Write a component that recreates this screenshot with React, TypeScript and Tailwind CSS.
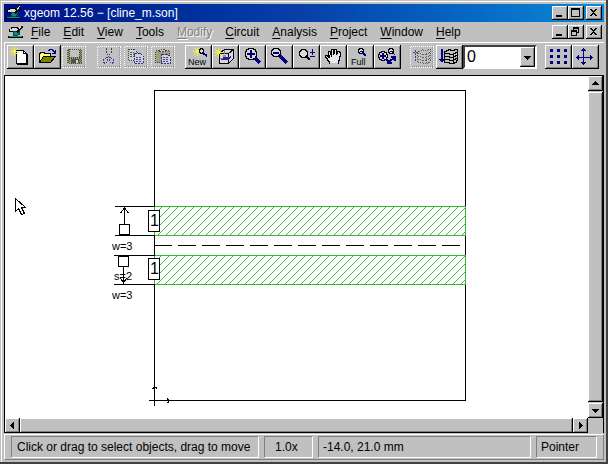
import React from "react"
import clsx from "clsx"

interface ToolItem {
  label: string
  icon: React.ReactNode
  disabled?: boolean
}

const raised =
  "bg-[#c0c0c0] shadow-[inset_-1px_-1px_0_#000,inset_1px_1px_0_#fff,inset_-2px_-2px_0_#808080]"

const menus = [
  { text: "File" },
  { text: "Edit" },
  { text: "View" },
  { text: "Tools" },
  { text: "Modify", disabled: true },
  { text: "Circuit" },
  { text: "Analysis" },
  { text: "Project" },
  { text: "Window" },
  { text: "Help" },
]

const Star = ({ x, y }: { x: number; y: number }) => (
  <g transform={`translate(${x} ${y})`} stroke="#f4f440" fill="none">
    <path d="M-3 -3L4 4M4 -3L-3 4M0.5 -4V5M-4 0.5H5" />
  </g>
)

const Layers = ({ color }: { color: string }) => (
  <g fill="none" stroke={color}>
    <path d="M8.5 6.5h2v-1h2v-1h2v1h4v-1h3v11h-1v2h-2v1h-5v-1h-5z" />
    <path d="M9 8.5h4v1h4v-1h2v-1h2M9 11.5h4v1h4v-1h2v-1h2M9 14.5h4v1h4v-1h2v-1h2M17.5 9v9" />
  </g>
)

const fileTools: ToolItem[] = [
  {
    label: "New project",
    icon: (
      <>
        <path d="M9.5 5.5h7l3 3v10h-10z" fill="#fff" stroke="#000" />
        <path d="M16.5 5.5v3h3M10 19.5h11M20.5 9v10" fill="none" stroke="#000" />
        <Star x={7} y={6} />
      </>
    ),
  },
  {
    label: "Open",
    icon: (
      <>
        <path d="M5.5 17.5v-9h1v-1h4v1h6v3" fill="#ffff80" stroke="#000" />
        <path d="M5.5 17.5l4 -6h12l-5 6z" fill="#808000" stroke="#000" />
        <path d="M14 5.5h1v-1h3v1h1v1h1v1M21.5 5v3.5h-4" fill="none" stroke="#000080" />
      </>
    ),
  },
  {
    label: "Save",
    disabled: true,
    icon: (
      <>
        <path d="M6.5 4.5h14v14h-13l-1 -1z" fill="#a0a080" stroke="#505040" strokeDasharray="1 1" />
        <path d="M9 5h9v7h-9z" fill="#c0c0c0" />
        <path d="M10 14h8v4h-8z" fill="#505050" />
        <path d="M15 15h2v3h-2z" fill="#d0d0d0" />
        <path
          d="M7.5 5v13M8.5 4v14M18.5 5v13M19.5 4v13M8 12.5h11M8 13.5h11"
          stroke="#505030"
          strokeDasharray="1 1"
        />
      </>
    ),
  },
]

const editTools: ToolItem[] = [
  {
    label: "Cut",
    disabled: true,
    icon: (
      <>
        <path d="M10.5 3v4l3 6M15.5 3v4l-4 6" fill="none" stroke="#404040" strokeDasharray="2 1" />
        <path
          d="M10.5 12.5l-3 2v3l2 1l2 -2v-3zM14.5 12.5l3 2v3l-2 1l-2 -2v-3z"
          fill="none"
          stroke="#4040a0"
          strokeDasharray="2 1"
        />
      </>
    ),
  },
  {
    label: "Copy",
    disabled: true,
    icon: (
      <>
        <path d="M5.5 4.5h6l3 3v8h-9z" fill="#d0d0d0" stroke="#404040" strokeDasharray="1 1" />
        <path d="M7 7.5h4M7 9.5h6M7 11.5h6" stroke="#505050" strokeDasharray="2 1" />
        <path d="M11.5 8.5h6l3 3v7h-9z" fill="#d0d0d0" stroke="#303090" strokeDasharray="2 1" />
        <path d="M13 12.5h6M13 14.5h6M13 16.5h6" stroke="#4040a0" strokeDasharray="2 1" />
      </>
    ),
  },
  {
    label: "Paste",
    disabled: true,
    icon: (
      <>
        <path d="M5.5 5.5h14v12h-14z" fill="#a0a080" stroke="#404030" strokeDasharray="1 1" />
        <path d="M9.5 6.5v-2h2l1 -1l1 1h2v2z" fill="#d0d0b0" stroke="#404040" strokeDasharray="2 1" />
        <path d="M11.5 9.5h6l3 3v6h-9z" fill="#d0d0d0" stroke="#303090" strokeDasharray="2 1" />
        <path d="M13 12.5h5M13 14.5h6M13 16.5h6" stroke="#4040a0" strokeDasharray="2 1" />
      </>
    ),
  },
]

const viewTools: ToolItem[] = [
  {
    label: "New view",
    icon: (
      <>
        <Star x={12} y={6} />
        <path d="M15.5 3.5h2v1h1v3h-1v1h-2v-1h-1v-3h1z" fill="#d8d8d8" stroke="#000" />
        <path d="M18 8l4 3" stroke="#000080" strokeWidth="2" />
        <text x="3" y="20" fontSize="9" className="font-['Liberation_Sans',Arial,sans-serif]">
          New
        </text>
      </>
    ),
  },
  {
    label: "3D view",
    icon: (
      <>
        <path d="M7.5 8.5l5 -4h9v9l-5 5h-9z" fill="#d8d8d8" stroke="#000" />
        <path d="M7.5 8.5h9v10M16.5 8.5l5 -4" fill="none" stroke="#000" />
        <path d="M9 15l2 -3h6l2 -2v3l-3 2z" fill="#2020a0" />
        <path d="M11 12v-2h3v2z" fill="#c08080" />
        <path d="M12.5 5v4M8 13.5h3" stroke="#808080" />
        <Star x={6} y={7} />
      </>
    ),
  },
  {
    label: "Zoom in",
    icon: (
      <>
        <path
          d="M9.5 3.5h5v1h2v2h1v5h-1v2h-2v1h-5v-1h-2v-2h-1v-5h1v-2h2z"
          fill="#d8d8d8"
          stroke="#000"
        />
        <path d="M12 5v8M8 9h8" stroke="#000080" strokeWidth="2" />
        <path d="M16 13l5 5" stroke="#000080" strokeWidth="3" />
      </>
    ),
  },
  {
    label: "Zoom out",
    icon: (
      <>
        <path d="M7.5 3.5h5v1h1v1h1v4h-1v1h-1v1h-5v-1h-1v-1h-1v-4h1v-1h1z" fill="#d8d8d8" stroke="#000" />
        <path d="M7 8h6" stroke="#000080" strokeWidth="2" />
        <path d="M14 11l7 7" stroke="#000080" strokeWidth="3" />
      </>
    ),
  },
  {
    label: "Zoom factor",
    icon: (
      <>
        <path d="M8.5 4.5h4v1h1v1h1v4h-1v1h-1v1h-4v-1h-1v-1h-1v-4h1v-1h1z" fill="#d8d8d8" stroke="#000" />
        <path d="M14 12l3 3" stroke="#000" strokeWidth="2" />
        <path d="M19.5 4v6M17 7.5h5M17 11.5h5" stroke="#000080" />
      </>
    ),
  },
  {
    label: "Pan",
    icon: (
      <>
        <path
          d="M9 18v-2h-1v-1h-1v-2h-1v-1h-1v-2h2v1h1v1h1v-3h-1v-3h2v2h1v2h1v-6h2v5h1v-5h2v6h1v-4h2v6h-1v4h-1v2z"
          fill="#e8e8e8"
        />
        <path
          d="M9.5 19v-2.5h-1v-1h-1v-2h-1v-1h-1v-2h2v1h1v1h1v-2h-1v-4h2v3h1v2M11.5 9v-4.5h2v5M14.5 9v-4.5h2v5.5M17.5 9v-2.5h2v1h1v4h-1v4h-1v3.5"
          fill="none"
          stroke="#000"
        />
      </>
    ),
  },
  {
    label: "Full view",
    icon: (
      <>
        <path d="M12.5 3.5h3v1h1v3h-1v1h-3v-1h-1v-3h1z" fill="#d8d8d8" stroke="#000" />
        <path d="M13 6.5h3" stroke="#000080" />
        <path d="M16 8l3 3" stroke="#000080" strokeWidth="2" />
        <text x="4" y="20" fontSize="9" className="font-['Liberation_Sans',Arial,sans-serif]">
          Full
        </text>
      </>
    ),
  },
  {
    label: "Previous view",
    icon: (
      <>
        <path d="M7.5 6.5h3v1h2v2h1v3h-1v2h-2v1h-3v-1h-2v-2h-1v-3h1v-2h2z" fill="#d8d8d8" stroke="#000" />
        <path d="M9 8v6M6 11h6" stroke="#000080" strokeWidth="2" />
        <path d="M15.5 3.5h3v1h1v3h-1v1h-3v-1h-1v-3h1z" fill="#d8d8d8" stroke="#000" />
        <path d="M16 6.5h3M19 8l2 2" stroke="#000080" />
        <path d="M12 14l3 3l6 -5M21 11v5M17 11.5h5M13 18h5" fill="none" stroke="#000080" strokeWidth="2" />
      </>
    ),
  },
]

const levelTools: ToolItem[] = [
  {
    label: "Level up",
    disabled: true,
    icon: (
      <>
        <g strokeDasharray="1 1">
          <Layers color="#606060" />
        </g>
        <path d="M6.5 5v12M4 7.5h5" stroke="#4040a0" strokeDasharray="2 1" />
      </>
    ),
  },
  {
    label: "Level down",
    icon: (
      <>
        <Layers color="#000" />
        <path d="M5 4h2v11h-2z" fill="#000080" />
        <path d="M3 14h6l-3 4z" fill="#000080" />
      </>
    ),
  },
]

const gridTools: ToolItem[] = [
  {
    label: "Snap",
    icon: (
      <path
        d="M5 4h3v3h-3zM12 4h3v3h-3zM19 4h3v3h-3zM5 10h3v3h-3zM12 10h3v3h-3zM19 10h3v3h-3zM5 16h3v3h-3zM12 16h3v3h-3zM19 16h3v3h-3z"
        fill="#000080"
      />
    ),
  },
  {
    label: "Measure",
    icon: (
      <path
        d="M11.5 3v17M9 5.5h5M10 4.5h3M9 17.5h5M10 18.5h3M4 12.5h17M6.5 10v5M5.5 11v3M18.5 10v5M19.5 11v3"
        stroke="#000080"
        fill="none"
      />
    ),
  },
]

const ToolGroup = ({ items }: { items: ToolItem[] }) => (
  <div className="flex">
    {items.map((item) => (
      <button
        key={item.label}
        type="button"
        aria-label={item.label}
        disabled={item.disabled}
        className={clsx("h-6 w-[27px]", !item.disabled && raised)}
      >
        <svg className="block h-6 w-[27px]" viewBox="0 0 27 24" shapeRendering="crispEdges">
          {item.disabled && (
            <g fill="none" strokeDasharray="1 1">
              <path d="M1.5 23V1.5H25" stroke="#fff" />
              <path d="M2 22.5H25M24.5 2V23" stroke="#fff" />
              <path d="M1 21.5H25M23.5 2V23" stroke="#909090" />
            </g>
          )}
          {item.icon}
        </svg>
      </button>
    ))}
  </div>
)

const AppIcon = () => (
  <svg className="size-4 shrink-0" viewBox="0 0 16 16" shapeRendering="crispEdges" aria-hidden="true">
    <path d="M1 5h2v-2h7v1h2v4h-11z" fill="#000" />
    <path d="M2 5h2v-1h5v1h1v2h-8z" fill="#d8d8d8" />
    <path d="M5 7h7v4h-2v1h-5z" fill="#005058" />
    <path d="M6 8h4v3h-4z" fill="#208080" />
    <path d="M0 12h15v2h-15z" fill="#000" />
    <path d="M1 12h13v1h-13z" fill="#00a070" />
    <path d="M8 8l5 -6h2v1l-5 6z" fill="#101010" />
    <path d="M10.5 5.5l3 -4" stroke="#e0e0a0" />
  </svg>
)

const controlPaths = {
  Minimize: "M4 9h6v2h-6z",
  Maximize: "M3 2h9v9h-9zM4 4v6h7v-6z",
  Restore: "M5 2h6v6h-2v3h-6v-6h2zM6 4v1h3v2h1v-3zM4 7v3h4v-3z",
  Close:
    "M4 3h2v1h1v1h1v-1h1v-1h2v1h-1v1h-1v1h-1v1h1v1h1v1h1v1h-2v-1h-1v-1h-1v1h-1v1h-2v-1h1v-1h1v-1h1v-1h-1v-1h-1v-1h-1z",
}

const ControlButton = ({ name }: { name: keyof typeof controlPaths }) => (
  <button type="button" aria-label={name} className={clsx("h-[14px] w-4", raised)}>
    <svg className="block h-[14px] w-4" viewBox="0 0 16 14" shapeRendering="crispEdges">
      <path d={controlPaths[name]} fillRule="evenodd" />
    </svg>
  </button>
)

const WindowControls = ({ middle }: { middle: "Maximize" | "Restore" }) => (
  <div className="ml-auto flex gap-[2px]">
    <div className="flex">
      <ControlButton name="Minimize" />
      <ControlButton name={middle} />
    </div>
    <ControlButton name="Close" />
  </div>
)

const arrows = {
  up: "M7 5h1v1h1v1h1v1h1v1h-7v-1h1v-1h1v-1h1z",
  down: "M4 6h7v1h-1v1h-1v1h-1v1h-1v-1h-1v-1h-1v-1h-1z",
  left: "M9 4v7h-1v-1h-1v-1h-1v-1h-1v-1h1v-1h1v-1h1v-1z",
  right: "M6 4h1v1h1v1h1v1h1v1h-1v1h-1v1h-1v1h-1z",
}

const ScrollButton = ({ dir }: { dir: keyof typeof arrows }) => (
  <button type="button" aria-label={`Scroll ${dir}`} className={clsx("size-[15px] shrink-0", raised)}>
    <svg className="block size-[15px]" viewBox="0 0 15 15" shapeRendering="crispEdges">
      <path d={arrows[dir]} />
    </svg>
  </button>
)

const Strip = ({ y }: { y: number }) => (
  <>
    <rect x="149.5" y={y + 0.5} width="311" height="29" fill="#fff" />
    <rect x="149.5" y={y + 0.5} width="311" height="29" fill="url(#hatch)" stroke="#38b838" />
  </>
)

const Port = ({ y }: { y: number }) => (
  <>
    <rect x="143.5" y={y + 0.5} width="11" height="21" fill="#fff" stroke="#000" />
    <text x="145" y={y + 16} fontSize="16">
      1
    </text>
  </>
)

const Drawing = () => (
  <svg
    className="min-w-0 flex-1 bg-white font-['Liberation_Sans',Arial,sans-serif]"
    shapeRendering="crispEdges"
    role="img"
    aria-label="Circuit geometry"
  >
    <defs>
      <pattern id="hatch" width="8" height="8" patternUnits="userSpaceOnUse">
        <path d="M-1 9L9 -1M-1 1L1 -1M7 9L9 7" stroke="#40b840" />
      </pattern>
    </defs>
    <rect x="149.5" y="14.5" width="311" height="310" fill="none" stroke="#000" />
    <Strip y={130} />
    <Strip y={179} />
    <path d="M149 169.5h311" stroke="#000" strokeDasharray="18 6" />
    {/* dimension lines */}
    <path d="M110 130.5h40M110 159.5h40M109 179.5h41M109 208.5h41" stroke="#000" />
    <path d="M119.5 131v17M115.5 137l4 -5l4 5M118.5 190v18M115.5 202l3 5l3 -5" fill="none" stroke="#000" />
    <path d="M114.5 148.5h10v10h-10zM113.5 180.5h10v10h-10z" fill="#fff" stroke="#000" />
    <g fontSize="11">
      <text x="107" y="174">w=3</text>
      <text x="109" y="204">s=2</text>
      <text x="107" y="223">w=3</text>
    </g>
    <Port y={134} />
    <Port y={182} />
    {/* origin axes */}
    <path d="M149.5 310v20M144 324.5h20M147 312.5h1v-1h3v1h1M162.5 322v1h1v3h-1v1" fill="none" stroke="#000" />
    {/* pointer */}
    <path d="M10.5 122.5v13l3 -3l3 6l3 -1l-3 -6h4z" fill="#fff" stroke="#000" />
  </svg>
)

const sunken = "border border-[#808080] border-r-white border-b-white flex items-center"

const App = () => {
  return (
    <div className="flex min-h-screen flex-col border-r-2 border-b-2 border-[#404040] bg-[#c0c0c0] pt-px pl-px font-['Liberation_Sans',Arial,sans-serif] text-xs text-black">
      <div className="flex flex-1 flex-col border-t border-l border-white p-[2px]">
        <header className="flex h-[18px] items-center gap-[2px] bg-linear-to-r from-[#000c88] via-[#0840a8] to-[#1088d8] px-[2px] text-white">
          <AppIcon />
          <h1 className="text-xs leading-4">xgeom 12.56 − [cline_m.son]</h1>
          <WindowControls middle="Maximize" />
        </header>
        <nav className="flex h-5 items-center pr-[2px] pl-1">
          <AppIcon />
          <div className="ml-[7px] flex gap-[13px]">
            {menus.map((menu) => (
              <button
                key={menu.text}
                type="button"
                disabled={menu.disabled}
                className={clsx(
                  "leading-4",
                  menu.disabled && "text-[#808080] [text-shadow:1px_1px_0_#fff]"
                )}
              >
                <span className="underline underline-offset-2">{menu.text[0]}</span>
                {menu.text.slice(1)}
              </button>
            ))}
          </div>
          <WindowControls middle="Restore" />
        </nav>
        <div className="flex gap-2 border-t border-l border-white px-[2px] pt-[2px] pb-[6px]">
          <ToolGroup items={fileTools} />
          <ToolGroup items={editTools} />
          <ToolGroup items={viewTools} />
          <div className="flex">
            <ToolGroup items={levelTools} />
            <div className="relative h-6 w-[74px]">
              <select
                aria-label="Level"
                className="h-6 w-full appearance-none border-2 border-[#404040] border-r-white border-b-white bg-white pl-[2px] text-base leading-5"
              >
                <option>0</option>
              </select>
              <span
                className={clsx(
                  "pointer-events-none absolute top-[2px] right-[2px] flex h-5 w-[15px] items-center",
                  raised
                )}
              >
                <svg className="size-[15px]" viewBox="0 0 15 15" shapeRendering="crispEdges">
                  <path d={arrows.down} />
                </svg>
              </span>
            </div>
          </div>
          <ToolGroup items={gridTools} />
        </div>
        <main className="flex flex-1 flex-col border-t border-r border-l border-black">
          <div className="flex flex-1">
            <Drawing />
            <div className="flex w-[15px] flex-col gap-px">
              <ScrollButton dir="up" />
              <div className={clsx("flex-1", raised)} />
              <ScrollButton dir="down" />
            </div>
          </div>
          <div className="flex pr-[15px]">
            <ScrollButton dir="left" />
            <div className={clsx("flex-1", raised)} />
            <ScrollButton dir="right" />
          </div>
        </main>
        <footer className="mt-px flex gap-[5px] border border-white border-r-[#808080] border-b-[#808080] px-[6px] py-px">
          <p className={clsx("h-[22px] w-[248px] pl-[5px]", sunken)}>
            Click or drag to select objects, drag to move
          </p>
          <p className={clsx("h-[22px] w-[49px] pl-[10px]", sunken)}>1.0x</p>
          <p className={clsx("h-[22px] flex-1 pl-1", sunken)}>-14.0, 21.0 mm</p>
          <p className={clsx("h-[22px] w-[61px] pl-1", sunken)}>Pointer</p>
        </footer>
      </div>
    </div>
  )
}

export default App
